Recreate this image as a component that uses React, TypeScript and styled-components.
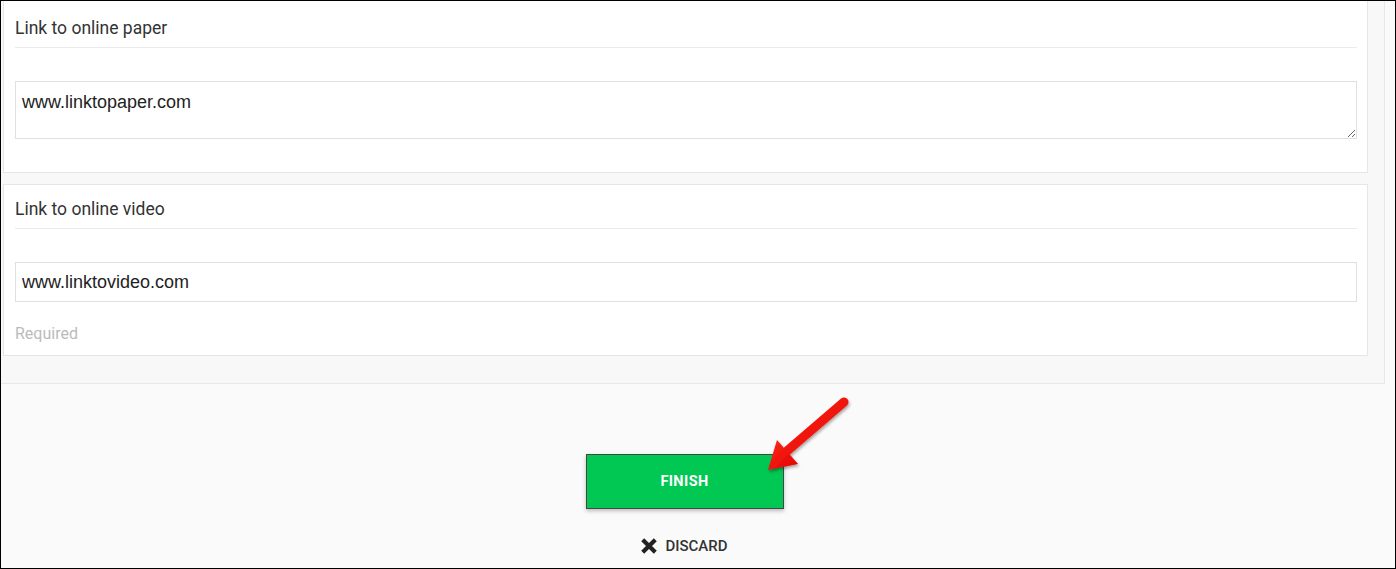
import styled, { createGlobalStyle } from 'styled-components';

const GlobalStyle = createGlobalStyle`
  body {
    margin: 0;
    background: #fafafa;
    font-family: Roboto, "Liberation Sans", sans-serif;
  }
`;

const Frame = styled.div`
  position: relative;
  width: 1396px;
  height: 569px;
  box-sizing: border-box;
  border: 1px solid #000;
  background: #fafafa;
  overflow: hidden;
`;

const FormArea = styled.div`
  width: 1384px;
  box-sizing: border-box;
  padding: 0 16px 27px 2px;
  background: #f8f8f8;
  border-right: 1px solid #e8e8e8;
  border-bottom: 1px solid #e8e8e8;
  display: flex;
  flex-direction: column;
  gap: 11px;
`;

const Card = styled.section<{ $top: number; $bottom: number; $first?: boolean }>`
  background: #fff;
  border: 1px solid #e6e6e6;
  padding: ${(p) => p.$top}px 10px ${(p) => p.$bottom}px 11px;
  margin-top: ${(p) => (p.$first ? '-1px' : '0')};
`;

const Label = styled.div`
  font-size: 17.5px;
  line-height: 20px;
  color: #333;
  padding-bottom: 9px;
  border-bottom: 1px solid #ebebeb;
  margin-bottom: 33px;
`;

const fieldStyles = `
  display: block;
  width: 100%;
  box-sizing: border-box;
  border: 1px solid #e0e0e0;
  background: #fff;
  font-family: "Liberation Sans", Arial, sans-serif;
  font-size: 18px;
  color: #222;
  outline: none;
  margin: 0;
`;

const TextArea = styled.textarea`
  ${fieldStyles}
  height: 58px;
  padding: 10px 6px;
  line-height: 20px;
  resize: vertical;
`;

const TextInput = styled.input`
  ${fieldStyles}
  height: 40px;
  padding: 0 6px;
`;

const Hint = styled.div`
  margin-top: 22px;
  font-size: 16px;
  line-height: 20px;
  color: #bbb;
`;

const Actions = styled.div`
  display: flex;
  flex-direction: column;
  align-items: center;
  padding: 70px 27px 0 0;
`;

const FinishButton = styled.button`
  width: 198px;
  height: 55px;
  background: #00c853;
  border: 1px solid #464646;
  box-shadow: 0 2px 4px rgba(0, 0, 0, 0.25);
  color: #fff;
  font-family: Roboto, sans-serif;
  font-weight: 700;
  font-size: 14.5px;
  letter-spacing: 0.4px;
  cursor: pointer;
`;

const DiscardButton = styled.button`
  margin-top: 27px;
  display: flex;
  align-items: center;
  gap: 8px;
  background: none;
  border: none;
  padding: 0;
  font-family: Roboto, sans-serif;
  font-weight: 500;
  font-size: 15px;
  line-height: 20px;
  color: #333;
  cursor: pointer;

  svg {
    width: 16px;
    height: 16px;
  }
`;

const Arrow = styled.svg`
  position: absolute;
  left: 750px;
  top: 385px;
  width: 110px;
  height: 100px;
  overflow: visible;
  pointer-events: none;
`;

function CloseIcon() {
  return (
    <svg viewBox="0 0 16 16">
      <path d="M3.2 3.2 L12.8 12.8 M12.8 3.2 L3.2 12.8" stroke="#222" strokeWidth="4.2" strokeLinecap="square" fill="none" />
    </svg>
  );
}

export default function App() {
  return (
    <>
      <GlobalStyle />
      <Frame>
        <FormArea>
          <Card $first $top={17} $bottom={33}>
            <Label>Link to online paper</Label>
            <TextArea readOnly defaultValue="www.linktopaper.com" />
          </Card>
          <Card $top={14} $bottom={11}>
            <Label>Link to online video</Label>
            <TextInput readOnly defaultValue="www.linktovideo.com" />
            <Hint>Required</Hint>
          </Card>
        </FormArea>
        <Actions>
          <FinishButton>FINISH</FinishButton>
          <DiscardButton>
            <CloseIcon />
            DISCARD
          </DiscardButton>
        </Actions>
        {/* annotation arrow pointing at the finish button */}
        <Arrow viewBox="750 385 110 100">
          <defs>
            <filter id="arrowShadow" x="-20%" y="-20%" width="140%" height="140%">
              <feDropShadow dx="1" dy="2" stdDeviation="1.5" floodColor="#000" floodOpacity="0.35" />
            </filter>
            <linearGradient id="arrowFill" x1="0" y1="0" x2="1" y2="1">
              <stop offset="0" stopColor="#ff2a1a" />
              <stop offset="1" stopColor="#e00000" />
            </linearGradient>
          </defs>
          <g filter="url(#arrowShadow)">
            <line x1="843" y1="401" x2="786" y2="450" stroke="url(#arrowFill)" strokeWidth="9" strokeLinecap="round" />
            <polygon points="767,469 776,439 797,463" fill="url(#arrowFill)" />
          </g>
        </Arrow>
      </Frame>
    </>
  );
}
